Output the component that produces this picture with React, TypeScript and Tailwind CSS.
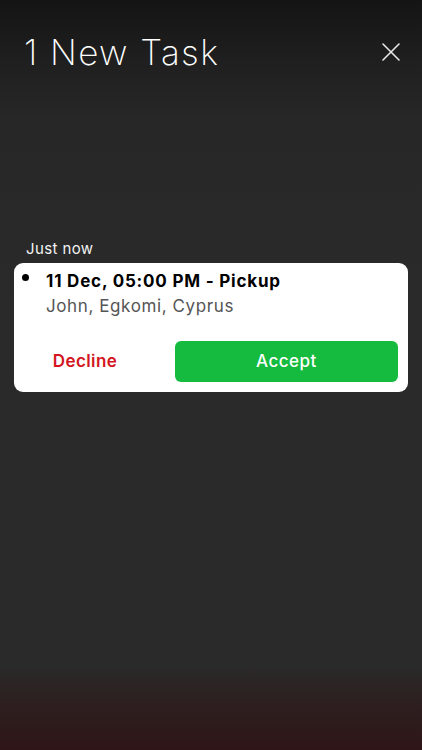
import React from "react";

export default function App() {
  return (
    <div
      className="relative flex h-[750px] w-full flex-col overflow-hidden bg-[linear-gradient(to_bottom,#141414_0px,#1f1f1f_60px,#272727_120px,#2a2a2a_300px,#2a2a2a_665px,#2d2020_700px,#2f1517_750px)]"
      style={{ fontFamily: 'Inter, "Open Sans", sans-serif' }}
    >
      <div className="flex items-start justify-between pl-[24px] pr-[22px] pt-[35px]">
        <h1 className="text-[35px] font-extralight leading-[35px] tracking-[1.4px] text-white">1 New Task</h1>
        <button className="mt-[8px] flex h-[18px] w-[18px] items-center justify-center text-white">
          <svg width="18" height="18" viewBox="0 0 18 18" fill="none">
            <path d="M1 1L17 17M17 1L1 17" stroke="#e8e8e8" strokeWidth="1.6" strokeLinecap="round" />
          </svg>
        </button>
      </div>

      <div className="mt-[169px] pl-[26px] text-[15px] leading-[20px] tracking-[0.4px] text-[#f2f2f2]">Just now</div>

      <div className="mx-[14px] mt-[4px] rounded-[9px] bg-white pb-[10px]">
        <div className="relative pl-[32px] pt-[7px]">
          <span className="absolute left-[8px] top-[11px] h-[7px] w-[7px] rounded-full bg-black" />
          <div className="text-[17px] font-bold leading-[22px] tracking-[0.8px] text-black">11 Dec, 05:00 PM - Pickup</div>
          <div className="mt-[2px] text-[17px] leading-[24px] tracking-[0.6px] text-[#555555]">John, Egkomi, Cyprus</div>
        </div>
        <div className="mt-[23px] flex items-center pl-[10px] pr-[10px]">
          <button className="w-[122px] text-[17px] font-semibold leading-[41px] tracking-[0.4px] text-[#d3161e]">Decline</button>
          <button className="ml-[29px] h-[41px] flex-1 rounded-[6px] bg-[#14bb3e] text-[17px] font-medium tracking-[0.5px] text-white">
            Accept
          </button>
        </div>
      </div>
    </div>
  );
}
